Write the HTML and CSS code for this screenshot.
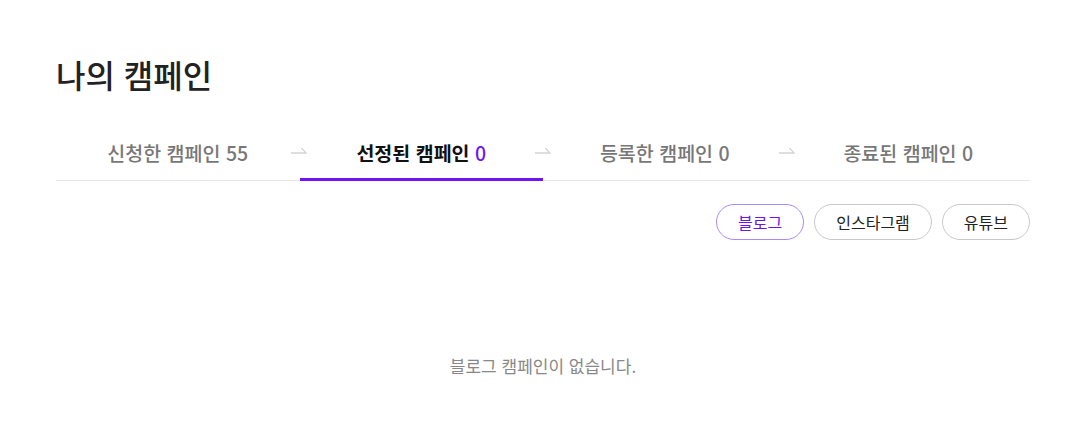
FILE: index.html
```html
<!DOCTYPE html>
<html lang="ko">
<head>
<meta charset="utf-8">
<link rel="stylesheet" href="styles.css">
</head>
<body>
<div class="page">
  <h1 class="title">나의 캠페인</h1>
  <nav class="tabs">
    <div class="tab">신청한 캠페인 <span class="count">55</span></div>
    <div class="tab active">선정된 캠페인 <span class="count">0</span></div>
    <div class="tab">등록한 캠페인 <span class="count">0</span></div>
    <div class="tab">종료된 캠페인 <span class="count">0</span></div>
    <svg class="arrow a1" width="16" height="7" viewBox="0 0 16 7"><path d="M0 6H15L10.5 1" fill="none" stroke="#d4d4d4" stroke-width="1.3"/></svg>
    <svg class="arrow a2" width="16" height="7" viewBox="0 0 16 7"><path d="M0 6H15L10.5 1" fill="none" stroke="#d4d4d4" stroke-width="1.3"/></svg>
    <svg class="arrow a3" width="16" height="7" viewBox="0 0 16 7"><path d="M0 6H15L10.5 1" fill="none" stroke="#d4d4d4" stroke-width="1.3"/></svg>
  </nav>
  <div class="filters">
    <button class="chip selected">블로그</button>
    <button class="chip">인스타그램</button>
    <button class="chip">유튜브</button>
  </div>
  <p class="empty">블로그 캠페인이 없습니다.</p>
</div>
</body>
</html>
```
FILE: styles.css
```css
* { box-sizing: border-box; }
body {
  margin: 0;
  background: #fff;
  font-family: "Noto Sans CJK KR", "Noto Sans", sans-serif;
  color: #222;
}
.page {
  padding: 49px 44px 0 56px;
}
.title {
  margin: 0;
  font-size: 32px;
  font-weight: 500;
  line-height: 50px;
  color: #222;
}
.tabs {
  position: relative;
  display: grid;
  grid-template-columns: repeat(4, 1fr);
  margin-top: 32px;
  border-bottom: 1px solid #e6e6e6;
}
.tab {
  text-align: center;
  font-size: 19.5px;
  font-weight: 500;
  color: #777;
  line-height: 26px;
  padding: 9px 0 12px;
  border-bottom: 3px solid transparent;
  margin-bottom: -1px;
}
.tab.active {
  color: #111;
  font-weight: 700;
  border-bottom-color: #7014f5;
}
.tab.active .count {
  color: #7014f5;
  font-weight: 500;
}
.arrow {
  position: absolute;
  top: 16px;
}
.a1 { left: 235px; }
.a2 { left: 479px; }
.a3 { left: 723px; }
.filters {
  display: flex;
  justify-content: flex-end;
  gap: 10px;
  margin-top: 23px;
}
.chip {
  font-family: inherit;
  font-size: 16px;
  font-weight: 400;
  color: #222;
  background: #fff;
  border: 1px solid #c8c8c8;
  border-radius: 18px;
  height: 36px;
  padding: 0 21px;
  line-height: 34px;
}
.chip.selected {
  border-color: #a98af5;
  color: #6a14e8;
}
.empty {
  margin: 114px 0 0;
  text-align: center;
  font-size: 17px;
  color: #888;
  line-height: 24px;
}
```
